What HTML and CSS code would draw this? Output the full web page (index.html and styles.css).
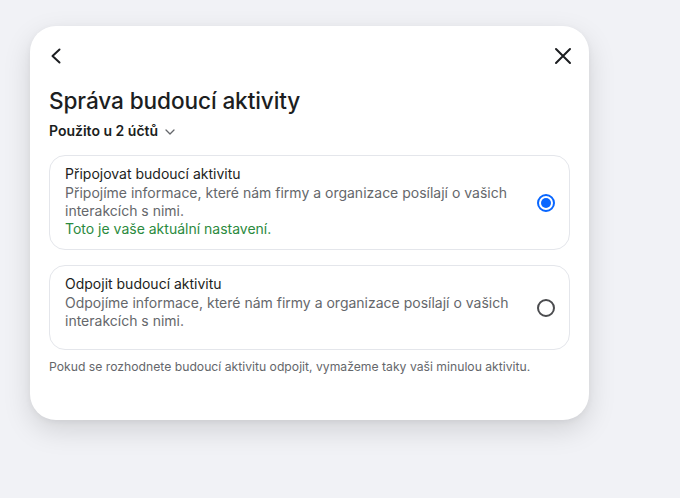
FILE: index.html
```html
<!DOCTYPE html>
<html lang="cs">
<head>
<meta charset="utf-8">
<title>Správa budoucí aktivity</title>
<link rel="stylesheet" href="styles.css">
</head>
<body>
<div class="dialog">
  <div class="topbar">
    <button class="icon-btn" aria-label="Zpět">
      <svg width="24" height="24" viewBox="0 0 24 24"><path d="M15.5 5.5 L8.5 12 L15.5 18.5" fill="none" stroke="#1c1e21" stroke-width="2" stroke-linecap="round" stroke-linejoin="round"/></svg>
    </button>
    <button class="icon-btn" aria-label="Zavřít">
      <svg width="24" height="24" viewBox="0 0 24 24"><path d="M5 5 L19 19 M19 5 L5 19" fill="none" stroke="#1c1e21" stroke-width="2" stroke-linecap="round"/></svg>
    </button>
  </div>
  <h1 class="title">Správa budoucí aktivity</h1>
  <div class="accounts">Použito u 2 účtů
    <svg class="chev" width="10" height="6" viewBox="0 0 10 6"><path d="M1 1 L5 5 L9 1" fill="none" stroke="#65676b" stroke-width="1.3" stroke-linecap="round" stroke-linejoin="round"/></svg>
  </div>
  <div class="options">
    <label class="option">
      <div class="option-text">
        <div class="option-title">Připojovat budoucí aktivitu</div>
        <div class="option-desc">Připojíme informace, které nám firmy a organizace posílají o vašich<br>interakcích s nimi.</div>
        <div class="option-current">Toto je vaše aktuální nastavení.</div>
      </div>
      <span class="radio radio-on"><span class="dot"></span></span>
    </label>
    <label class="option option-short">
      <div class="option-text">
        <div class="option-title">Odpojit budoucí aktivitu</div>
        <div class="option-desc">Odpojíme informace, které nám firmy a organizace posílají o vašich<br>interakcích s nimi.</div>
      </div>
      <span class="radio"></span>
    </label>
  </div>
  <p class="note">Pokud se rozhodnete budoucí aktivitu odpojit, vymažeme taky vaši minulou aktivitu.</p>
</div>
</body>
</html>
```
FILE: styles.css
```css
* { box-sizing: border-box; }
html, body { margin: 0; }
body {
  background: #f1f2f6;
  padding: 26px 30px;
  height: 498px;
  font-family: Inter, "Noto Sans", sans-serif;
  color: #1c1e21;
}
.dialog {
  width: 559px;
  height: 394px;
  background: #fff;
  border-radius: 26px;
  box-shadow: 0 10px 28px rgba(0, 0, 0, 0.13), 0 2px 6px rgba(0,0,0,0.05);
  padding: 18px 19px 0 19px;
}
.topbar {
  display: flex;
  justify-content: space-between;
  align-items: center;
  height: 24px;
}
.icon-btn {
  border: 0;
  background: none;
  padding: 0;
  width: 24px;
  height: 24px;
  display: flex;
  cursor: pointer;
}
.icon-btn:last-child { margin-right: -5px; }
.icon-btn:first-child { margin-left: -5px; }
.title {
  margin: 19px 0 0 0;
  font-size: 22.6px;
  line-height: 28px;
  font-weight: 500;
  letter-spacing: -0.1px;
}
.accounts {
  margin-top: 7px;
  font-size: 14px;
  line-height: 18px;
  font-weight: 600;
  display: flex;
  align-items: center;
  gap: 7px;
}
.chev { margin-top: 1px; }
.options {
  margin-top: 15px;
  display: flex;
  flex-direction: column;
  gap: 15px;
}
.option {
  display: flex;
  align-items: center;
  border: 1px solid #e4e6eb;
  border-radius: 16px;
  padding: 0 14px 0 15px;
  cursor: pointer;
}
.option-text {
  flex: 1;
  padding: 8px 0 11px 0;
}
.option-short .option-text { padding-bottom: 19px; }
.option-title {
  font-size: 14px;
  line-height: 20px;
  color: #1c1e21;
}
.option-desc {
  font-size: 14px;
  line-height: 18px;
  color: #65676b;
}
.option-current {
  font-size: 14px;
  line-height: 18px;
  color: #2b8a3e;
}
.radio {
  width: 18px;
  height: 18px;
  border-radius: 50%;
  border: 2px solid #4b4c4f;
  display: flex;
  align-items: center;
  justify-content: center;
  flex: none;
}
.radio-on { border-color: #0866ff; }
.radio-on .dot {
  width: 10px;
  height: 10px;
  border-radius: 50%;
  background: #0866ff;
}
.note {
  margin: 9px 0 0 0;
  font-size: 12.2px;
  line-height: 16px;
  color: #65676b;
}
```
